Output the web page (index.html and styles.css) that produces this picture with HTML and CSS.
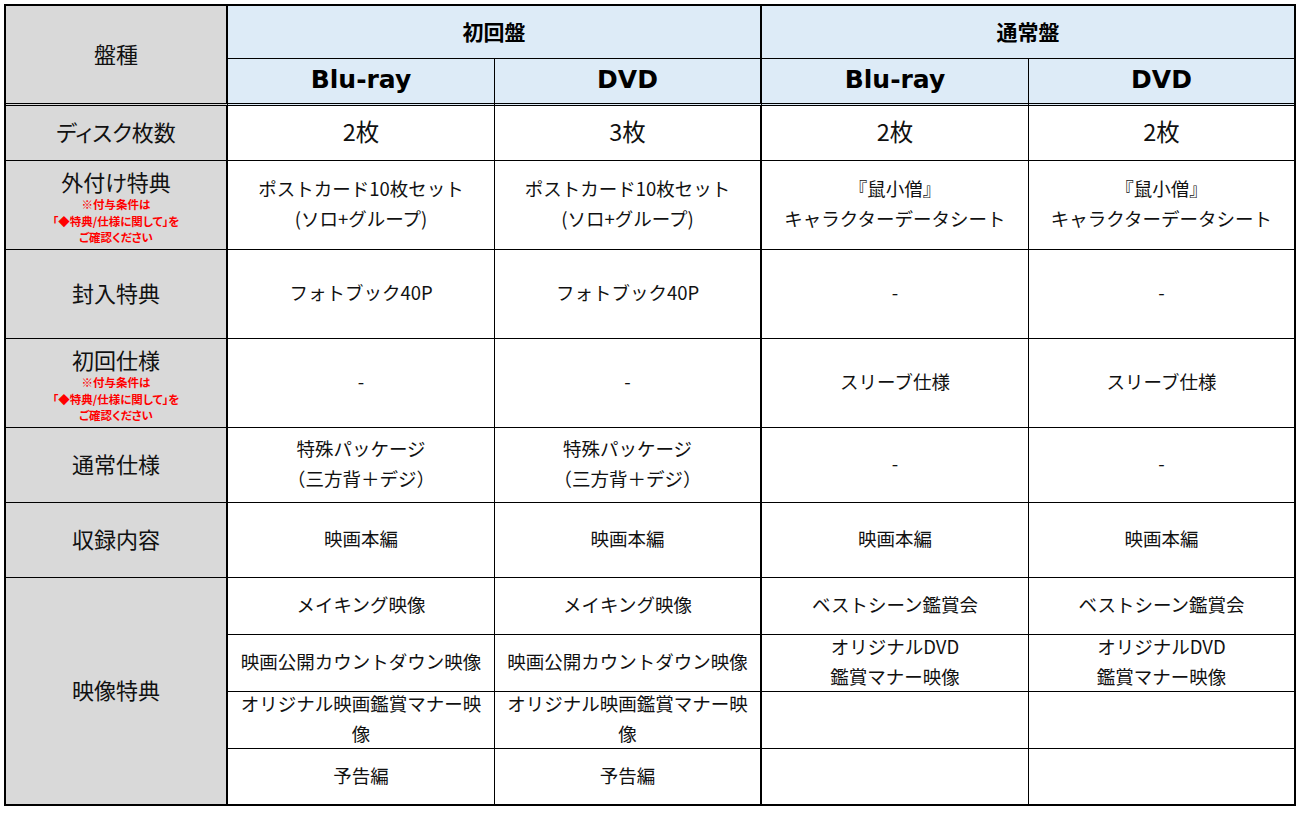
FILE: index.html
```html
<!DOCTYPE html>
<html lang="ja">
<head>
<meta charset="utf-8">
<title>盤種比較</title>
<link rel="stylesheet" href="styles.css">
</head>
<body>
<div class="sheet">
  <!-- header row 1 -->
  <div class="cell label span2 double">盤種</div>
  <div class="cell hd group thick-r">初回盤</div>
  <div class="cell hd group last">通常盤</div>
  <!-- header row 2 -->
  <div class="cell hd sub double">Blu-ray</div>
  <div class="cell hd sub double thick-r">DVD</div>
  <div class="cell hd sub double">Blu-ray</div>
  <div class="cell hd sub double last">DVD</div>

  <!-- ディスク枚数 -->
  <div class="cell label">ディスク枚数</div>
  <div class="cell big">2枚</div>
  <div class="cell big thick-r">3枚</div>
  <div class="cell big">2枚</div>
  <div class="cell big last">2枚</div>

  <!-- 外付け特典 -->
  <div class="cell label stack">
    <span>外付け特典</span>
    <span class="note">※付与条件は<br>「◆特典/仕様に関して」を<br>ご確認ください</span>
  </div>
  <div class="cell">ポストカード10枚セット<br>(ソロ+グループ)</div>
  <div class="cell thick-r">ポストカード10枚セット<br>(ソロ+グループ)</div>
  <div class="cell">『鼠小僧』<br>キャラクターデータシート</div>
  <div class="cell last">『鼠小僧』<br>キャラクターデータシート</div>

  <!-- 封入特典 -->
  <div class="cell label">封入特典</div>
  <div class="cell">フォトブック40P</div>
  <div class="cell thick-r">フォトブック40P</div>
  <div class="cell">-</div>
  <div class="cell last">-</div>

  <!-- 初回仕様 -->
  <div class="cell label stack">
    <span>初回仕様</span>
    <span class="note">※付与条件は<br>「◆特典/仕様に関して」を<br>ご確認ください</span>
  </div>
  <div class="cell">-</div>
  <div class="cell thick-r">-</div>
  <div class="cell">スリーブ仕様</div>
  <div class="cell last">スリーブ仕様</div>

  <!-- 通常仕様 -->
  <div class="cell label">通常仕様</div>
  <div class="cell">特殊パッケージ<br>（三方背＋デジ）</div>
  <div class="cell thick-r">特殊パッケージ<br>（三方背＋デジ）</div>
  <div class="cell">-</div>
  <div class="cell last">-</div>

  <!-- 収録内容 -->
  <div class="cell label">収録内容</div>
  <div class="cell">映画本編</div>
  <div class="cell thick-r">映画本編</div>
  <div class="cell">映画本編</div>
  <div class="cell last">映画本編</div>

  <!-- 映像特典 -->
  <div class="cell label span4 nob">映像特典</div>
  <div class="cell">メイキング映像</div>
  <div class="cell thick-r">メイキング映像</div>
  <div class="cell">ベストシーン鑑賞会</div>
  <div class="cell last">ベストシーン鑑賞会</div>

  <div class="cell">映画公開カウントダウン映像</div>
  <div class="cell thick-r">映画公開カウントダウン映像</div>
  <div class="cell">オリジナルDVD<br>鑑賞マナー映像</div>
  <div class="cell last">オリジナルDVD<br>鑑賞マナー映像</div>

  <div class="cell">オリジナル映画鑑賞マナー映<br>像</div>
  <div class="cell thick-r">オリジナル映画鑑賞マナー映<br>像</div>
  <div class="cell"></div>
  <div class="cell last"></div>

  <div class="cell nob">予告編</div>
  <div class="cell nob thick-r">予告編</div>
  <div class="cell nob"></div>
  <div class="cell nob last"></div>
</div>
</body>
</html>
```

FILE: styles.css
```css
html, body {
  margin: 0;
  padding: 0;
  background: #ffffff;
}

body {
  font-family: "Noto Sans CJK JP", "Noto Sans", sans-serif;
  color: #111111;
}

.sheet {
  margin: 4px 0 0 4px;
  width: 1292px;
  box-sizing: border-box;
  border: 2px solid #000;
  display: grid;
  grid-template-columns: 222px 267px 267px 267px 265px;
  grid-template-rows: 53px 47px 55px 89px 89px 89px 75px 75px 57px 57px 57px 55px;
  background: #fff;
}

.cell {
  box-sizing: border-box;
  border-right: 1px solid #000;
  border-bottom: 1px solid #000;
  display: flex;
  align-items: center;
  justify-content: center;
  text-align: center;
  font-size: 18.5px;
  line-height: 30px;
  padding: 0 1px 4px;
  white-space: nowrap;
}

.cell.last { border-right: none; }
.cell.thick-r { border-right: 2px solid #000; }
.cell.double { border-bottom: 3px double #000; }
.cell.nob { border-bottom: none; }

.label {
  background: #d9d9d9;
  border-right: 2px solid #000;
  font-size: 22px;
  line-height: 28px;
  font-feature-settings: "palt";
}

.span2 { grid-row: span 2; }
.span4 { grid-row: span 4; }

.stack {
  flex-direction: column;
  padding-top: 3px;
  padding-bottom: 0;
}

.note {
  display: block;
  color: #ff0000;
  font-size: 11.5px;
  font-weight: 700;
  line-height: 16.5px;
  margin-top: 1px;
}

.hd {
  background: #ddebf7;
  font-weight: 700;
  color: #000;
}

.group {
  grid-column: span 2;
  font-size: 21px;
  padding-bottom: 3px;
}

.sub {
  font-family: "DejaVu Sans", "Noto Sans CJK JP", sans-serif;
  font-size: 25px;
  padding-bottom: 2px;
}

.big {
  font-size: 23.5px;
  padding-bottom: 5px;
}
```
